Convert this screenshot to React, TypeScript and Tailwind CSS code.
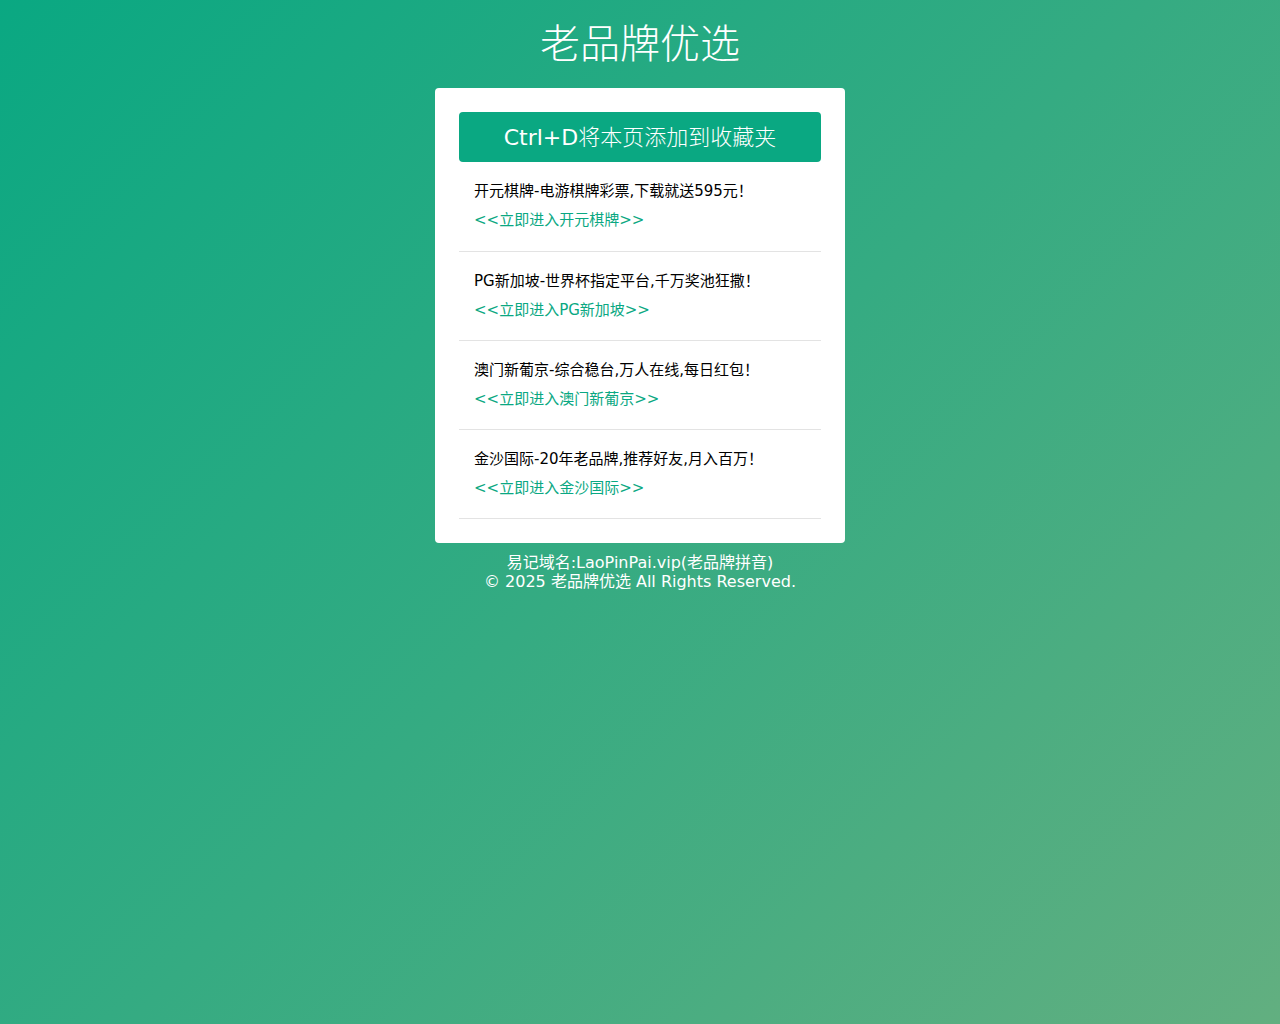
import React from 'react';

const items = [
  { title: '开元棋牌-电游棋牌彩票,下载就送595元', link: '<<立即进入开元棋牌>>' },
  { title: 'PG新加坡-世界杯指定平台,千万奖池狂撒', link: '<<立即进入PG新加坡>>' },
  { title: '澳门新葡京-综合稳台,万人在线,每日红包', link: '<<立即进入澳门新葡京>>' },
  { title: '金沙国际-20年老品牌,推荐好友,月入百万', link: '<<立即进入金沙国际>>' },
];

const App: React.FC = () => {
  return (
    <div className="min-h-[1024px] w-full bg-[linear-gradient(135deg,#0aa882_0%,#35ab82_50%,#62af80_100%)] font-['DejaVu_Sans','Noto_Sans_CJK_SC',sans-serif]">
      <header className="h-[88px] pt-[20px] text-center">
        <h1 className="text-[40px] leading-[48px] font-light text-white">老品牌优选</h1>
      </header>

      <main className="mx-auto w-[410px] rounded-[4px] bg-white px-6 pt-6 pb-[24px]">
        <div className="flex h-[50px] items-center justify-center rounded-[4px] bg-[#0aa882] text-[22px] text-white">
          Ctrl+D<span className="font-light">将本页添加到收藏夹</span>
        </div>
        <ul>
          {items.map((item, idx) => (
            <li key={idx} className="border-b border-[#e3e3e3] px-[15px] pt-[17px] pb-[18px] first:pb-[19px]">
              <p className="text-[15px] leading-[24px] text-black">
                {item.title}
                <span className="inline-block w-[15px] text-center">！</span>
              </p>
              <a href="#" className="mt-[5px] block text-[15px] leading-[24px] text-[#0aa882]">
                {item.link}
              </a>
            </li>
          ))}
        </ul>
      </main>

      <footer className="pt-[10px] text-center text-[16px] leading-[19px] text-white">
        <p>易记域名:LaoPinPai.vip(老品牌拼音)</p>
        <p>&copy; 2025 老品牌优选 All Rights Reserved.</p>
      </footer>
    </div>
  );
};

export default App;
